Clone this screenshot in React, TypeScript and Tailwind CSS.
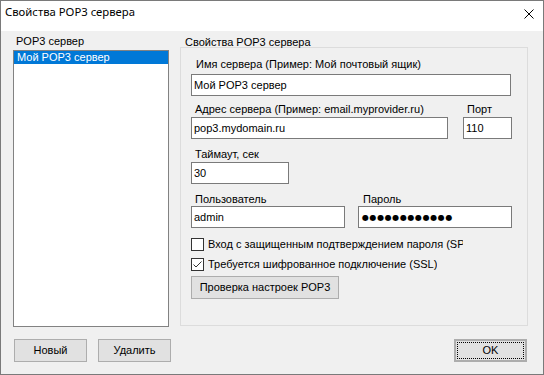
import type { ReactNode } from 'react';

const Label = ({ children, className = '' }: { children: ReactNode; className?: string }) => (
  <div className={`h-[13px] leading-[13px] whitespace-nowrap ${className}`}>{children}</div>
);

const TextBox = ({ children, className = '' }: { children?: ReactNode; className?: string }) => (
  <div className={`h-[22px] border border-[#7a7a7a] bg-white pl-[2px] flex items-center leading-[13px] whitespace-nowrap overflow-hidden ${className}`}>
    {children}
  </div>
);

const Button = ({ children, className = '' }: { children: ReactNode; className?: string }) => (
  <div className={`h-[23px] bg-[#e1e1e1] border border-[#adadad] flex items-center justify-center leading-[13px] ${className}`}>
    {children}
  </div>
);

const CheckBox = ({ checked, children, className = '' }: { checked?: boolean; children: ReactNode; className?: string }) => (
  <div className={`flex items-center h-[13px] ${className}`}>
    <div className="w-[13px] h-[13px] border border-[#333333] bg-white shrink-0">
      {checked && (
        <svg width="11" height="11" viewBox="0 0 11 11">
          <path d="M1.5 5.5 L4 8 L9.5 2.5" fill="none" stroke="#333333" strokeWidth="1" />
        </svg>
      )}
    </div>
    <span className="ml-[4px] leading-[13px] whitespace-nowrap overflow-hidden">{children}</span>
  </div>
);

export default function App() {
  return (
    <div className="w-[544px] h-[375px] border border-[#7a7a7a] bg-[#f0f0f0] flex flex-col text-[11px] text-black font-['Liberation_Sans',Arial,sans-serif]">
      {/* title bar */}
      <div className="h-[30px] bg-white flex items-start justify-between shrink-0">
        <span className="mt-[3px] ml-[4px] text-[11.3px] leading-[16px] font-['Noto_Sans',sans-serif]">Свойства POP3 сервера</span>
        <svg className="mt-[8px] mr-[9px]" width="10" height="10" viewBox="0 0 10 10">
          <path d="M0.5 0.5 L9.5 9.5 M9.5 0.5 L0.5 9.5" stroke="#000" strokeWidth="1" />
        </svg>
      </div>

      <div className="flex-1 flex flex-col">
        <div className="flex items-start pl-[12px]">
          {/* server list */}
          <div className="w-[156px] mt-[4px]">
            <Label className="ml-[3px]">POP3 сервер</Label>
            <div className="mt-[2px] h-[277px] border border-[#828282] bg-white">
              <div className="h-[13px] leading-[13px] bg-[#0078d7] text-white pl-[3px]">Мой POP3 сервер</div>
            </div>
          </div>

          {/* properties group */}
          <div className="w-[348px] ml-[11px] mt-[6px]">
            <div className="h-[10px] leading-[10px] ml-[5px] whitespace-nowrap">Свойства POP3 сервера</div>
            <div className="h-[279px] border border-[#dcdcdc] pl-[10px] flex flex-col">
              <Label className="mt-[10px] ml-[5px]">Имя сервера (Пример: Мой почтовый ящик)</Label>
              <TextBox className="mt-[3px] w-[320px]">Мой POP3 сервер</TextBox>

              <div className="flex mt-[7px]">
                <div className="w-[257px]">
                  <Label className="ml-[4px]">Адрес сервера (Пример: email.myprovider.ru)</Label>
                  <TextBox className="mt-[1px]">pop3.mydomain.ru</TextBox>
                </div>
                <div className="w-[49px] ml-[15px]">
                  <Label className="ml-[4px]">Порт</Label>
                  <TextBox className="mt-[1px]">110</TextBox>
                </div>
              </div>

              <Label className="mt-[9px] ml-[4px]">Таймаут, сек</Label>
              <TextBox className="mt-[1px] w-[98px]">30</TextBox>

              <div className="flex mt-[9px]">
                <div className="w-[154px]">
                  <Label className="ml-[4px]">Пользователь</Label>
                  <TextBox>admin</TextBox>
                </div>
                <div className="w-[154px] ml-[13px]">
                  <Label className="ml-[5px]">Пароль</Label>
                  <TextBox className="pl-[3px]">
                    <span className="text-[8px] tracking-[0.6px] font-['DejaVu_Sans',sans-serif]">●●●●●●●●●●●●</span>
                  </TextBox>
                </div>
              </div>

              <CheckBox className="mt-[10px] w-[272px]">Вход с защищенным подтверждением пароля (SPA)</CheckBox>
              <CheckBox className="mt-[7px]" checked>Требуется шифрованное подключение (SSL)</CheckBox>

              <Button className="mt-[5px] w-[148px] h-[22px]">Проверка настроек POP3</Button>
            </div>
          </div>
        </div>

        {/* bottom buttons */}
        <div className="flex items-start mt-[12px] pl-[13px] pr-[16px]">
          <Button className="w-[73px]">Новый</Button>
          <Button className="w-[73px] ml-[11px]">Удалить</Button>
          <Button className="w-[73px] ml-auto border-2 border-[#0078d7] outline-1 outline-dotted outline-black outline-offset-[-4px]">OK</Button>
        </div>
      </div>
    </div>
  );
}
